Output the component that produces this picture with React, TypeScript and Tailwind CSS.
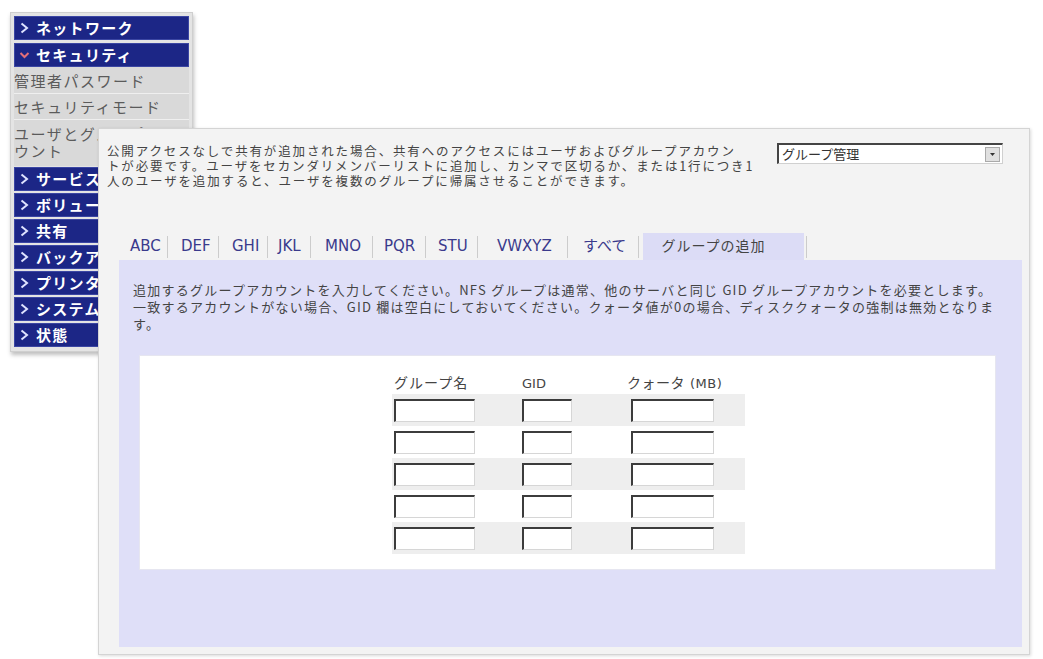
const bars = ["サービス", "ボリューム", "共有", "バックアップ", "プリンタ", "システム", "状態"];

const tabs = [
  { label: "ABC", w: "w-[49px]", pl: "pl-[11px]" },
  { label: "DEF", w: "w-[51px]", pl: "pl-[13px]" },
  { label: "GHI", w: "w-[49px]", pl: "pl-[13px]" },
  { label: "JKL", w: "w-[43px]", pl: "pl-[10px]" },
  { label: "MNO", w: "w-[62px]", pl: "pl-[14px]" },
  { label: "PQR", w: "w-[53px]", pl: "pl-[11px]" },
  { label: "STU", w: "w-[52px]", pl: "pl-[12px]" },
  { label: "VWXYZ", w: "w-[90px]", pl: "pl-[19px]" },
  { label: "すべて", w: "w-[71px]", pl: "pl-[15px]" },
];

function Chevron({ open }: { open?: boolean }) {
  if (open) {
    return (
      <svg width="11" height="10" viewBox="0 0 11 10" className="mr-[6px] shrink-0">
        <path d="M1.5 3 L5.5 7 L9.5 3" fill="none" stroke="#e46f78" strokeWidth="2" />
      </svg>
    );
  }
  return (
    <svg width="11" height="12" viewBox="0 0 11 12" className="mr-[6px] shrink-0">
      <path d="M2.5 1.5 L8 6 L2.5 10.5" fill="none" stroke="#dfe4ff" strokeWidth="2" />
    </svg>
  );
}

function NavBar({ label, open }: { label: string; open?: boolean }) {
  return (
    <div className="flex h-[24px] items-center bg-[#1c2686] pl-[5px] text-[15px] font-bold tracking-[1.3px] text-white shadow-[inset_0_0_0_1px_#3b46a3]">
      <Chevron open={open} />
      <span className="whitespace-nowrap">{label}</span>
    </div>
  );
}

function Sidebar() {
  return (
    <div className="absolute left-[10px] top-[12px] w-[183px] border border-[#cfcfcf] bg-[#e4e4e4] px-[3px] pb-[4px] pt-[3px] font-['Noto_Sans_CJK_JP',sans-serif] shadow-[1px_3px_4px_rgba(0,0,0,0.25)]">
      <NavBar label="ネットワーク" />
      <div className="mt-[3px]">
        <NavBar label="セキュリティ" open />
      </div>
      <div className="flex flex-col bg-[#d9d9d9] text-[15px] tracking-[1.5px] text-[#5b5b5b]">
        <div className="h-[27px] border-b border-[#efefef] leading-[27px]">管理者パスワード</div>
        <div className="h-[26px] border-b border-[#efefef] leading-[26px]">セキュリティモード</div>
        <div className="h-[46px] py-[5px] leading-[17px]">ユーザとグループアカウント</div>
      </div>
      <div className="mt-[1px] flex flex-col gap-[2px]">
        {bars.map((b) => (
          <NavBar key={b} label={b} />
        ))}
      </div>
    </div>
  );
}

function SelectBox() {
  return (
    <div className="flex h-[21px] w-[226px] items-center justify-between border-b border-l-2 border-r border-t-2 border-b-[#d0d0d0] border-l-[#444] border-r-[#d0d0d0] border-t-[#444] bg-white pl-[3px] pr-[2px]">
      <span className="text-[13px] leading-none text-[#333]">グループ管理</span>
      <div className="flex h-[15px] w-[15px] items-center justify-center border border-[#aaa] bg-[#e0e0e0]">
        <svg width="5" height="3" viewBox="0 0 5 3">
          <path d="M0 0 H5 L2.5 3 Z" fill="#333" />
        </svg>
      </div>
    </div>
  );
}

function Field({ w }: { w: string }) {
  return (
    <div
      className={`h-[23px] ${w} border-b border-l-2 border-r border-t-2 border-b-[#d6d6d6] border-l-[#3c3c3c] border-r-[#d6d6d6] border-t-[#3c3c3c] bg-white`}
    />
  );
}

function GroupTable() {
  return (
    <div className="ml-[252px] w-[353px] text-[14px] text-[#444]">
      <div className="flex h-[21px] items-center">
        <div className="w-[128px] pl-[2px] tracking-[1px]">グループ名</div>
        <div className="w-[107px] pl-[2px] font-['DejaVu_Sans',sans-serif] text-[13px]">GID</div>
        <div className="tracking-[0.5px]">
          クォータ <span className="font-['DejaVu_Sans',sans-serif] text-[13px]">(MB)</span>
        </div>
      </div>
      {[0, 1, 2, 3, 4].map((i) => (
        <div key={i} className={`flex h-[32px] items-center ${i % 2 === 0 ? "bg-[#eeeeee]" : "bg-white"}`}>
          <div className="w-[128px] pl-[2px]">
            <Field w="w-[81px]" />
          </div>
          <div className="w-[109px] pl-[2px]">
            <Field w="w-[50px]" />
          </div>
          <div className="pl-[2px]">
            <Field w="w-[83px]" />
          </div>
        </div>
      ))}
    </div>
  );
}

function Panel() {
  return (
    <div className="absolute left-[98px] top-[128px] h-[527px] w-[932px] border border-[#d4d4d4] bg-[#f3f3f3] font-['DejaVu_Sans','Noto_Sans_CJK_JP',sans-serif] shadow-[1px_1px_3px_rgba(0,0,0,0.15)]">
      <div className="flex items-start pl-[8px] pt-[14px]">
        <p className="w-[670px] whitespace-nowrap font-['Noto_Sans_CJK_JP',sans-serif] text-[12.5px] leading-[15px] tracking-[1.85px] text-[#444]">
          公開アクセスなしで共有が追加された場合、共有へのアクセスにはユーザおよびグループアカウン
          <br />
          トが必要です。ユーザをセカンダリメンバーリストに追加し、カンマで区切るか、または1行につき1
          <br />
          人のユーザを追加すると、ユーザを複数のグループに帰属させることができます。
        </p>
        <SelectBox />
      </div>

      <div className="ml-[20px] mr-[7px] mt-[45px]">
        <div className="flex h-[27px] items-stretch text-[15px] text-[#3a3a8c]">
          {tabs.map((t) => (
            <div key={t.label} className={`flex ${t.w} items-center ${t.pl}`}>
              <span className="flex-1 whitespace-nowrap">{t.label}</span>
              <span className="h-[22px] w-px bg-[#cccccc]" />
            </div>
          ))}
          <div className="ml-[4px] flex w-[161px] items-center justify-center bg-[#dcdcf6] pr-[20px] text-[14px] tracking-[1px] text-[#444]">
            グループの追加
          </div>
          <span className="ml-[2px] mt-[3px] h-[22px] w-px bg-[#cccccc]" />
        </div>

        <div className="h-[387px] bg-[#dfdff8] pt-[21px]">
          <p className="whitespace-nowrap pl-[14px] font-['Noto_Sans_CJK_JP',sans-serif] text-[13px] leading-[17px] tracking-[1.25px] text-[#444]">
            追加するグループアカウントを入力してください。NFS グループは通常、他のサーバと同じ GID グループアカウントを必要とします。
            <br />
            一致するアカウントがない場合、GID 欄は空白にしておいてください。クォータ値が0の場合、ディスククォータの強制は無効となりま
            <br />す。
          </p>
          <div className="ml-[20px] mt-[23px] w-[857px] border border-[#e6e6f0] bg-white pb-[15px] pt-[17px]">
            <GroupTable />
          </div>
        </div>
      </div>
    </div>
  );
}

export default function App() {
  return (
    <div className="relative h-[659px] w-[1043px] overflow-hidden bg-white">
      <Sidebar />
      <Panel />
    </div>
  );
}
